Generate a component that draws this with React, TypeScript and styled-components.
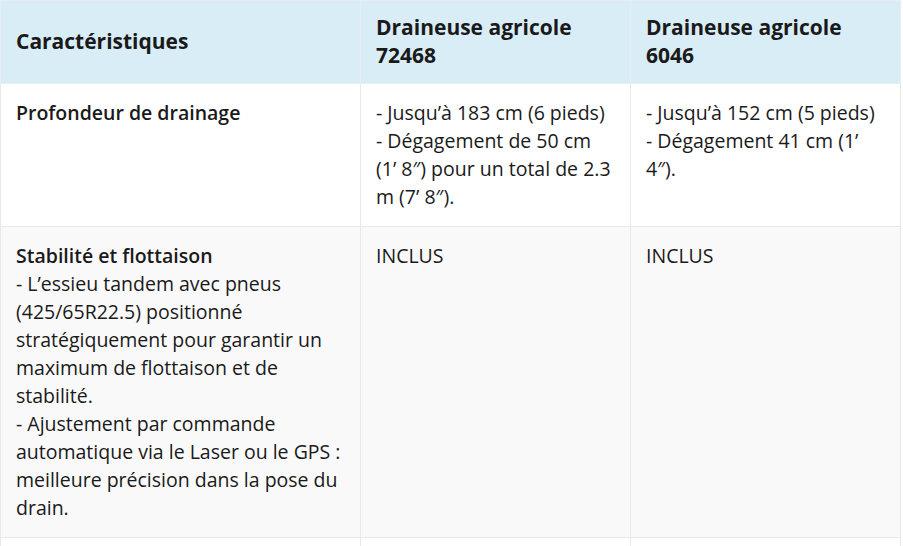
import styled, { createGlobalStyle } from "styled-components";

const GlobalStyle = createGlobalStyle`
    body {
        margin: 0;
        background: #ffffff;
        font-family: "Open Sans", "Noto Sans", sans-serif;
        color: #1a1a1a;
    }
`;

const Table = styled.table`
    width: 900px;
    border-collapse: collapse;
    table-layout: fixed;
    font-size: 19.5px;
    line-height: 28px;
`;

const HeadCell = styled.th<{ $w: number }>`
    box-sizing: border-box;
    width: ${(p) => p.$w}px;
    background-color: #d9edf7;
    border: 1px solid #e6eef2;
    padding: 12px 15px 14px;
    text-align: left;
    vertical-align: middle;
    font-size: 21px;
    font-weight: 700;
`;

const Row = styled.tr<{ $striped?: boolean }>`
    background-color: ${(p) => (p.$striped ? "#f9f9f9" : "#ffffff")};
`;

const Cell = styled.td`
    box-sizing: border-box;
    border: 1px solid #e8e8e8;
    padding: 15px 15px 15px;
    vertical-align: top;
`;

const Label = styled.strong`
    font-weight: 600;
`;

const rows = [
    {
        label: "Profondeur de drainage",
        detail: [],
        a: ["- Jusqu\u2019à 183 cm (6 pieds)", "- Dégagement de 50 cm (1\u2019 8\u2033) pour un total de 2.3 m (7\u2019 8\u2033)."],
        b: ["- Jusqu\u2019à 152 cm (5 pieds)", "- Dégagement 41 cm (1\u2019 4\u2033)."],
    },
    {
        label: "Stabilité et flottaison",
        detail: [
            "- L\u2019essieu tandem avec pneus (425/65R22.5) positionné stratégiquement pour garantir un maximum de flottaison et de stabilité.",
            "- Ajustement par commande automatique via le Laser ou le GPS : meilleure précision dans la pose du drain.",
        ],
        a: ["INCLUS"],
        b: ["INCLUS"],
    },
];

function Lines({ items }: { items: string[] }) {
    return (
        <>
            {items.map((t, i) => (
                <span key={i}>
                    {i > 0 && <br />}
                    {t}
                </span>
            ))}
        </>
    );
}

export default function App() {
    return (
        <>
            <GlobalStyle />
            <Table>
                <thead>
                    <tr>
                        <HeadCell $w={360}>Caractéristiques</HeadCell>
                        <HeadCell $w={270}>Draineuse agricole 72468</HeadCell>
                        <HeadCell $w={270}>Draineuse agricole 6046</HeadCell>
                    </tr>
                </thead>
                <tbody>
                    {rows.map((r, i) => (
                        <Row key={r.label} $striped={i % 2 === 1}>
                            <Cell>
                                <Label>{r.label}</Label>
                                {r.detail.map((d) => (
                                    <span key={d}>
                                        <br />
                                        {d}
                                    </span>
                                ))}
                            </Cell>
                            <Cell>
                                <Lines items={r.a} />
                            </Cell>
                            <Cell>
                                <Lines items={r.b} />
                            </Cell>
                        </Row>
                    ))}
                    <Row>
                        <Cell>&nbsp;</Cell>
                        <Cell>&nbsp;</Cell>
                        <Cell>&nbsp;</Cell>
                    </Row>
                </tbody>
            </Table>
        </>
    );
}
